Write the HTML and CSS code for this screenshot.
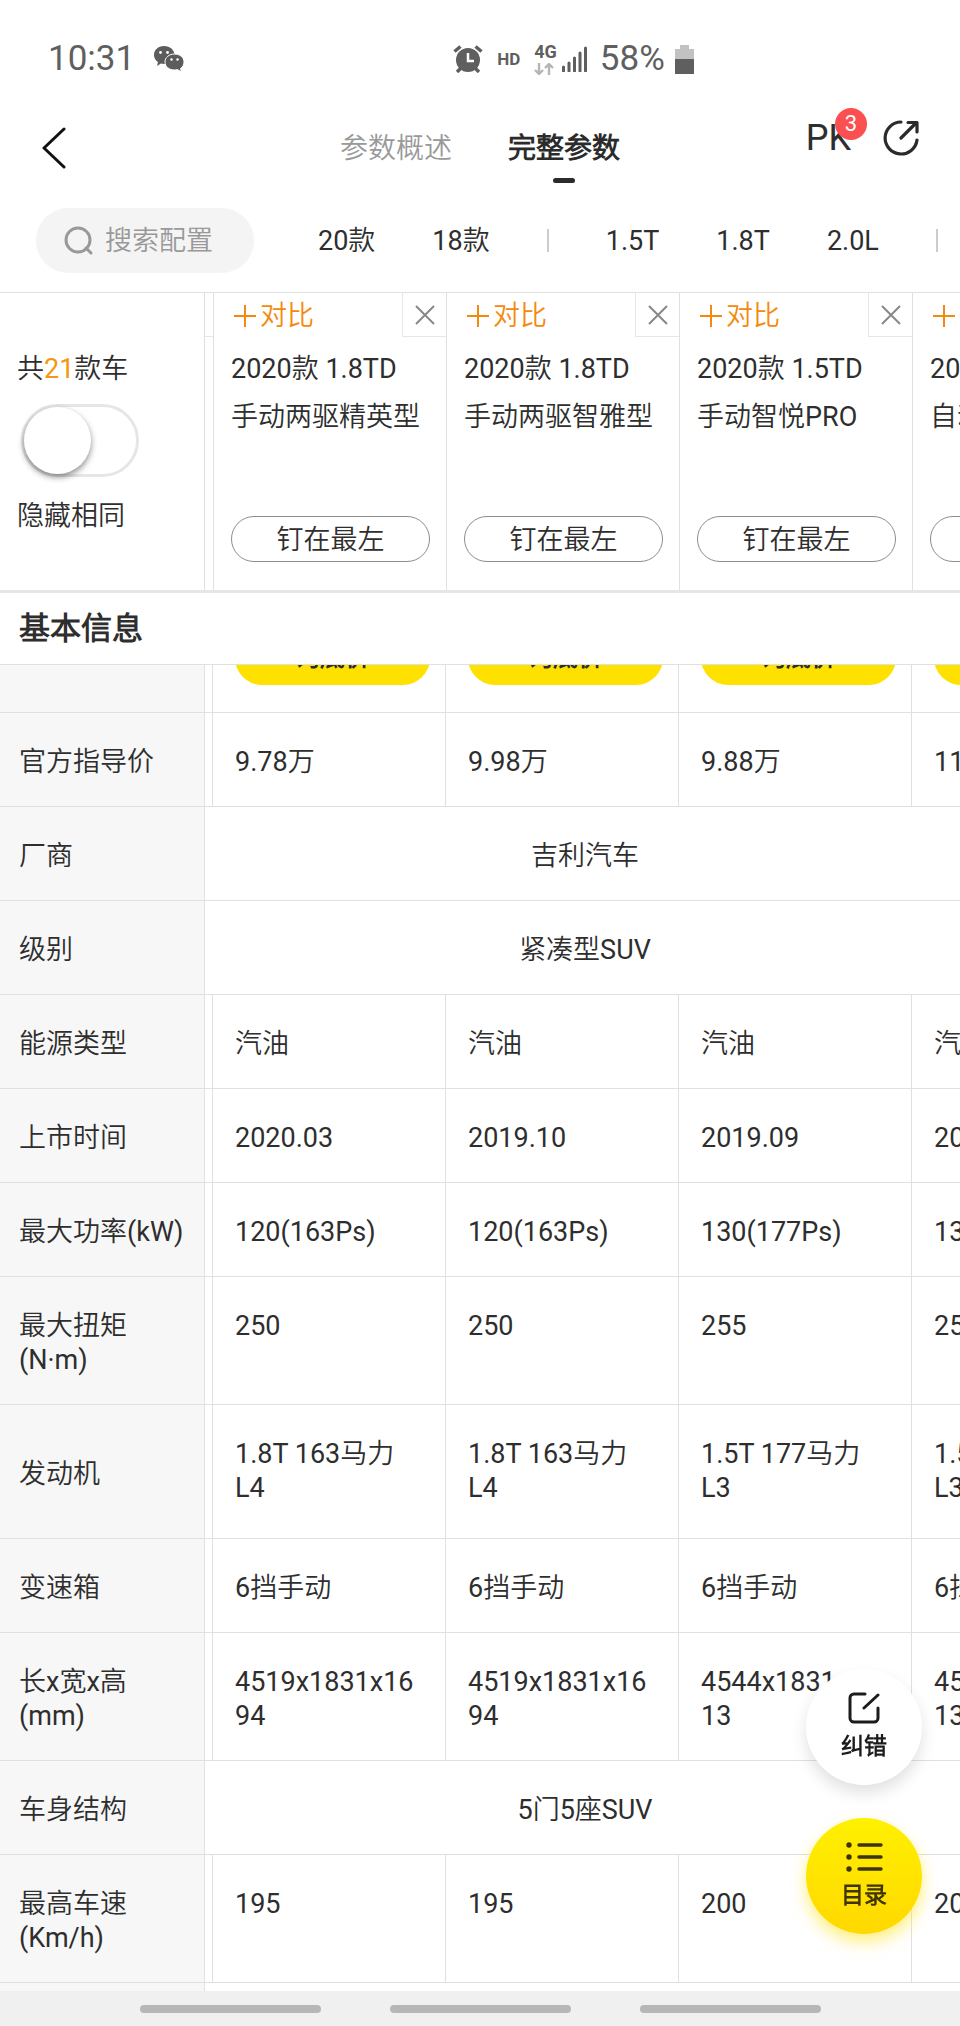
FILE: index.html
```html
<!DOCTYPE html>
<html lang="zh-CN">
<head>
    <meta charset="UTF-8">
    <meta name="viewport" content="width=device-width, initial-scale=1.0">
    <title>完整参数</title>
    <link rel="stylesheet" href="styles.css">
</head>
<body>

<!-- Shared icons -->
<svg class="defs" width="0" height="0" aria-hidden="true">
  <symbol id="plus" viewBox="0 0 22 22"><path d="M11 0v22M0 11h22" stroke="currentColor" stroke-width="2" fill="none"/></symbol>
  <symbol id="cross" viewBox="0 0 20 20"><path d="M1 1l18 18M19 1L1 19" stroke="currentColor" stroke-width="2" fill="none"/></symbol>
</svg>

<!-- Phone status bar -->
<div class="status">
  <div class="status_left">
    <span class="clock">10:31</span>
    <svg width="32" height="28" viewBox="0 0 32 28">
      <path d="M11 1C5 1 1 5 1 10c0 3 1.500 5.500 4 7l-1 4 4-2.500c1 .3 2 .4 3 .4 6 0 10.500-4 10.500-9S17 1 11 1z" fill="#5c5c5c"/>
      <path d="M21.500 9C16 9 12 12.500 12 17s4 8 9.500 8c1 0 2-.1 3-.4l4 2.400-1-3.500c2.300-1.500 3.500-3.800 3.500-6.500 0-4.500-4-8-9.500-8z" fill="#5c5c5c" stroke="#fff"/>
      <circle cx="7.500" cy="7.500" r="1.400" fill="#fff"/><circle cx="14.500" cy="7.500" r="1.400" fill="#fff"/>
      <circle cx="18.500" cy="14.500" r="1.200" fill="#fff"/><circle cx="24.500" cy="14.500" r="1.200" fill="#fff"/>
    </svg>
  </div>
  <div class="status_right">
    <svg width="30" height="28" viewBox="0 0 30 28">
      <circle cx="15" cy="15" r="12" fill="#5f5f5f"/>
      <path d="M1.500 6.500l6-5M28.500 6.500l-6-5M4 27l4-4M26 27l-4-4" stroke="#5f5f5f" stroke-width="3.500"/>
      <path d="M15 8v8h6" fill="none" stroke="#fff" stroke-width="2.500"/>
    </svg>
    <span class="hd">HD</span>
    <div class="network">
      <span>4G</span>
      <svg width="20" height="12" viewBox="0 0 20 12">
        <path d="M5 0v11M1 7l4 4 4-4M15 12V1M11 5l4-4 4 4" fill="none" stroke="#b5b5b5" stroke-width="2.400"/>
      </svg>
    </div>
    <svg class="bars" width="26" height="26" viewBox="0 0 26 26">
      <path d="M1.500 21v4M7 17v8M12.500 12v13M18 7v18M23.500 2v23" stroke="#5f5f5f" stroke-width="3" stroke-linecap="round"/>
    </svg>
    <span class="percent">58%</span>
    <svg width="20" height="29" viewBox="0 0 20 29">
      <path d="M5 0h9v4h5v11H0V4h5z" fill="#c2c2c2"/>
      <path d="M0 14h19v15H0z" fill="#5f5f5f"/>
    </svg>
  </div>
</div>

<!-- Title bar -->
<header class="topbar">
  <button class="back" aria-label="返回">
    <svg width="26" height="42" viewBox="0 0 26 42"><path d="M23 2L3 21l20 19" fill="none" stroke="#111" stroke-width="3" stroke-linecap="round" stroke-linejoin="round"/></svg>
  </button>
  <nav class="tabs">
    <a class="tab" href="#overview">参数概述</a>
    <a class="tab active" href="#full">完整参数</a>
  </nav>
  <div class="actions">
    <button class="pk">PK<span class="badge">3</span></button>
    <button class="share" aria-label="分享">
      <svg width="36" height="36" viewBox="0 0 36 36">
        <path d="M18 2A16 16 0 1 0 34 20M34 12V2.500h-9M18 18L33 3" fill="none" stroke="#2b2b2b" stroke-width="3.200" stroke-linecap="round" stroke-linejoin="round"/>
      </svg>
    </button>
  </div>
</header>

<!-- Search and quick filters -->
<div class="filters">
  <label class="search">
    <svg width="30" height="30" viewBox="0 0 30 30"><circle cx="14" cy="14" r="12" fill="none" stroke="#999" stroke-width="3"/><path d="M22 22l5 5" stroke="#999" stroke-width="3" stroke-linecap="round"/></svg>
    <input type="text" placeholder="搜索配置" aria-label="搜索配置">
  </label>
  <button>20款</button>
  <button>18款</button>
  <span class="divider"></span>
  <button>1.5T</button>
  <button>1.8T</button>
  <button>2.0L</button>
  <span class="divider"></span>
</div>

<!-- Pinned car list -->
<section class="cars">
  <div class="summary">
    <p>共<em>21</em>款车</p>
    <input class="switch" type="checkbox" id="hide-same">
    <label for="hide-same">隐藏相同</label>
  </div>
  <div class="gutter"></div>
  <article class="car">
    <div class="car_top">
      <button class="compare"><svg width="22" height="22"><use href="#plus"/></svg>对比</button>
      <button class="close" aria-label="移除"><svg width="20" height="20"><use href="#cross"/></svg></button>
    </div>
    <h2>2020款 1.8TD<br>手动两驱精英型</h2>
    <button class="pin">钉在最左</button>
  </article>
  <article class="car">
    <div class="car_top">
      <button class="compare"><svg width="22" height="22"><use href="#plus"/></svg>对比</button>
      <button class="close" aria-label="移除"><svg width="20" height="20"><use href="#cross"/></svg></button>
    </div>
    <h2>2020款 1.8TD<br>手动两驱智雅型</h2>
    <button class="pin">钉在最左</button>
  </article>
  <article class="car">
    <div class="car_top">
      <button class="compare"><svg width="22" height="22"><use href="#plus"/></svg>对比</button>
      <button class="close" aria-label="移除"><svg width="20" height="20"><use href="#cross"/></svg></button>
    </div>
    <h2>2020款 1.5TD<br>手动智悦PRO</h2>
    <button class="pin">钉在最左</button>
  </article>
  <article class="car">
    <div class="car_top">
      <button class="compare"><svg width="22" height="22"><use href="#plus"/></svg>对比</button>
      <button class="close" aria-label="移除"><svg width="20" height="20"><use href="#cross"/></svg></button>
    </div>
    <h2>2020款 1.5TD<br>自动智雅型</h2>
    <button class="pin">钉在最左</button>
  </article>
</section>

<h3 class="group">基本信息</h3>

<!-- Parameter table, scrolled a little below the group title -->
<main class="sheet">
  <table>
    <colgroup>
      <col class="col_label"><col class="col_gutter"><col class="col_car"><col class="col_car"><col class="col_car"><col class="col_car">
    </colgroup>
    <tr class="ask">
      <th></th><td class="gap"></td>
      <td><button>询底价</button></td><td><button>询底价</button></td><td><button>询底价</button></td><td><button>询底价</button></td>
    </tr>
    <tr><th>官方指导价</th><td class="gap"></td><td>9.78万</td><td>9.98万</td><td>9.88万</td><td>11.08万</td></tr>
    <tr><th>厂商</th><td class="same" colspan="5"><div>吉利汽车</div></td></tr>
    <tr><th>级别</th><td class="same" colspan="5"><div>紧凑型SUV</div></td></tr>
    <tr><th>能源类型</th><td class="gap"></td><td>汽油</td><td>汽油</td><td>汽油</td><td>汽油</td></tr>
    <tr><th>上市时间</th><td class="gap"></td><td>2020.03</td><td>2019.10</td><td>2019.09</td><td>2019.09</td></tr>
    <tr><th>最大功率(kW)</th><td class="gap"></td><td>120(163Ps)</td><td>120(163Ps)</td><td>130(177Ps)</td><td>130(177Ps)</td></tr>
    <tr><th>最大扭矩<br>(N·m)</th><td class="gap"></td><td>250</td><td>250</td><td>255</td><td>255</td></tr>
    <tr class="engine"><th>发动机</th><td class="gap"></td><td>1.8T 163马力 L4</td><td>1.8T 163马力 L4</td><td>1.5T 177马力 L3</td><td>1.5T 177马力 L3</td></tr>
    <tr><th>变速箱</th><td class="gap"></td><td>6挡手动</td><td>6挡手动</td><td>6挡手动</td><td>6挡自动</td></tr>
    <tr><th>长x宽x高<br>(mm)</th><td class="gap"></td><td>4519x1831x1694</td><td>4519x1831x1694</td><td>4544x1831x1713</td><td>4544x1831x1713</td></tr>
    <tr><th>车身结构</th><td class="same" colspan="5"><div>5门5座SUV</div></td></tr>
    <tr><th>最高车速<br>(Km/h)</th><td class="gap"></td><td>195</td><td>195</td><td>200</td><td>200</td></tr>
    <tr><th></th><td class="same" colspan="5"></td></tr>
  </table>
</main>

<!-- Floating buttons -->
<div class="floats">
  <button class="float">
    <svg width="32" height="32" viewBox="0 0 32 32"><path d="M17 2H6a4 4 0 0 0-4 4v20a4 4 0 0 0 4 4h20a4 4 0 0 0 4-4V16M16 16L30 3" fill="none" stroke="#1c1c1c" stroke-width="3" stroke-linecap="round"/></svg>
    纠错
  </button>
  <button class="float yellow">
    <svg width="38" height="32" viewBox="0 0 38 32">
      <path d="M14 4h22M14 16h22M14 28h22" stroke="#3d3400" stroke-width="3.400" stroke-linecap="round"/>
      <circle cx="4" cy="4" r="2.700" fill="#3d3400"/><circle cx="4" cy="16" r="2.700" fill="#3d3400"/><circle cx="4" cy="28" r="2.700" fill="#3d3400"/>
    </svg>
    目录
  </button>
</div>

<!-- System gesture bar -->
<footer class="gestures"><span></span><span></span><span></span></footer>

</body>
</html>
```
FILE: styles.css
```css
/* Basic reset */
*, *::before, *::after {
    box-sizing: border-box;
}

body {
    margin: 0;
    height: 100vh;
    display: flex;
    flex-direction: column;
    overflow: hidden;
    background: #fff;
    color: #2e2e2e;
    font-family: Roboto, "Noto Sans CJK SC DemiLight", "Noto Sans CJK SC", sans-serif;
    font-size: 27px;
    line-height: 34px;
}

button, input {
    margin: 0;
    padding: 0;
    border: 0;
    background: none;
    color: inherit;
    font: inherit;
}

button {
    flex: none;
    white-space: nowrap;
}

a {
    color: inherit;
    text-decoration: none;
}

svg {
    display: block;
    flex: none;
}

.defs {
    position: absolute;
}

/* Status bar */
.status {
    flex: none;
    display: flex;
    height: 118px;
    color: #5f5f5f;
}

.status_left, .status_right {
    display: flex;
    align-items: center;
}

.status_left {
    width: 47%;
    padding-left: 48px;
    gap: 18px;
}

.status_right {
    padding-left: 2px;
}

.clock, .percent {
    font-size: 35px;
}

.hd {
    margin: 0 14px;
    font-size: 17px;
    font-weight: 700;
}

.network {
    display: flex;
    flex-direction: column;
    gap: 2px;
    font-size: 18px;
    font-weight: 700;
    line-height: 18px;
}

.bars {
    margin: 0 12px 0 5px;
}

.percent {
    margin-right: 10px;
}

/* Title bar */
.topbar {
    flex: none;
    display: grid;
    grid-template-columns: 1fr auto 1fr;
    height: 72px;
    padding: 0 41px;
}

.back {
    width: 26px;
    height: 60px;
}

.tabs {
    display: flex;
    gap: 56px;
    padding-top: 2px;
    font-size: 28px;
    line-height: 58px;
}

.tab {
    color: #999;
}

.tab.active {
    color: #2b2b2b;
    font-weight: 700;
}

/* Short bar below the selected tab */
.tab.active::after {
    content: "";
    display: block;
    width: 22px;
    height: 5px;
    margin: 0 auto;
    border-radius: 3px;
    background: #2b2b2b;
}

.actions {
    display: flex;
    justify-content: flex-end;
    align-items: center;
    gap: 32px;
    height: 40px;
}

.pk {
    position: relative;
    font-size: 36px;
}

.badge {
    position: absolute;
    top: -13px;
    right: -16px;
    width: 32px;
    height: 32px;
    border-radius: 50%;
    background: #fc5050;
    color: #fff;
    font-size: 22px;
    line-height: 32px;
    text-align: center;
}

/* Filters */
.filters {
    flex: none;
    display: flex;
    align-items: center;
    gap: 57px;
    padding: 18px 0 19px 36px;
    border-bottom: 1px solid #e0e0e0;
    overflow: hidden;
}

.search {
    flex: none;
    display: flex;
    align-items: center;
    gap: 11px;
    width: 218px;
    height: 65px;
    margin-right: 7px;
    padding: 0 20px 0 28px;
    border-radius: 33px;
    background: #f4f4f4;
}

.search input {
    min-width: 0;
    width: 100%;
    outline: none;
}

.search input::placeholder {
    color: #999;
    opacity: 1;
}

.divider {
    flex: none;
    width: 2px;
    height: 23px;
    background: #ccc;
}

/* Pinned cars */
.cars {
    flex: none;
    display: grid;
    grid-template-columns: 205px 8px repeat(4, 233px);
    height: 300px;
    border-bottom: 3px solid #e6e6e6;
    overflow: hidden;
}

.summary {
    display: flex;
    flex-direction: column;
    align-items: flex-start;
    padding: 59px 0 0 17px;
    border-right: 1px solid #e0e0e0;
}

.summary p {
    margin: 0;
}

.summary em {
    color: #f5960f;
    font-style: normal;
}

.switch {
    appearance: none;
    width: 118px;
    height: 73px;
    margin: 18px 0 22px 4px;
    border: 3px solid #e6e6e6;
    border-radius: 37px;
    background: #fff;
}

.switch::before {
    content: "";
    display: block;
    width: 67px;
    height: 67px;
    border-radius: 50%;
    background: #fff;
    box-shadow: 0 3px 6px rgba(0, 0, 0, 0.45);
}

.switch:checked::before {
    margin-left: auto;
}

.gutter {
    height: 44px;
    border-bottom: 1px solid #e6e6e6;
}

.car {
    display: flex;
    flex-direction: column;
    border-left: 1px solid #e0e0e0;
}

.car_top {
    display: flex;
    justify-content: space-between;
    height: 44px;
}

.compare {
    display: flex;
    align-items: center;
    gap: 4px;
    padding-top: 2px;
    margin-left: 20px;
    color: #f5890c;
}

.close {
    display: flex;
    align-items: center;
    justify-content: center;
    width: 44px;
    border: solid #e6e6e6;
    border-width: 0 0 1px 1px;
    color: #888;
}

.car h2 {
    margin: 8px 0 0 17px;
    font-size: 27px;
    font-weight: 400;
    line-height: 48px;
    white-space: nowrap;
}

.pin {
    height: 46px;
    margin: auto 16px 28px 17px;
    padding-top: 1px;
    border: 1px solid #8c8c8c;
    border-radius: 23px;
}

.group {
    flex: none;
    margin: 0;
    padding: 0 19px;
    border-bottom: 1px solid #e0e0e0;
    font-size: 31px;
    font-weight: 700;
    line-height: 71px;
}

/* Parameter table */
.sheet {
    flex: 1;
    min-height: 0;
    overflow: hidden;
}

table {
    width: 1145px;
    margin-top: -54px;
    border-spacing: 0;
    table-layout: fixed;
}

.col_label {
    width: 205px;
}

.col_gutter {
    width: 8px;
}

.col_car {
    width: 233px;
}

th, td {
    height: 94px;
    border: solid #e0e0e0;
    border-width: 0 1px 1px 0;
    font-weight: 400;
    text-align: left;
}

th {
    padding: 32px 0 27px 19px;
    background: #f7f7f7;
    vertical-align: middle;
    white-space: nowrap;
}

td {
    padding: 32px 22px 27px 22px;
    vertical-align: top;
    overflow-wrap: anywhere;
}

td.gap {
    padding: 0;
}

/* Value shared by every car, centred in the visible part */
td.same {
    padding-left: 0;
    padding-right: 0;
}

.same div {
    width: calc(100vw - 200px);
    text-align: center;
}

.engine td {
    height: 134px;
}

.ask td {
    padding: 20px 15px 27px 22px;
}

.ask button {
    display: block;
    width: 100%;
    height: 54px;
    border-radius: 27px;
    background: #ffe100;
    font-size: 25px;
    font-weight: 700;
}

/* Floating buttons */
.floats {
    position: fixed;
    right: 38px;
    bottom: 92px;
    display: flex;
    flex-direction: column;
    gap: 33px;
}

.float {
    display: flex;
    flex-direction: column;
    align-items: center;
    justify-content: center;
    gap: 6px;
    width: 116px;
    height: 116px;
    padding-top: 2px;
    border-radius: 50%;
    background: #fff;
    box-shadow: 0 8px 16px rgba(0, 0, 0, 0.12);
    color: #1c1c1c;
    font-size: 23px;
    font-weight: 700;
}

.float.yellow {
    background: linear-gradient(#fff000, #ffd800);
    box-shadow: 0 8px 16px rgba(255, 225, 0, 0.5);
    color: #3d3400;
}

/* Gesture bar */
.gestures {
    flex: none;
    display: flex;
    align-items: center;
    justify-content: center;
    gap: 69px;
    height: 35px;
    background: #f0f0f0;
}

.gestures span {
    width: 181px;
    height: 8px;
    border-radius: 4px;
    background: #b7b7b7;
}
```
